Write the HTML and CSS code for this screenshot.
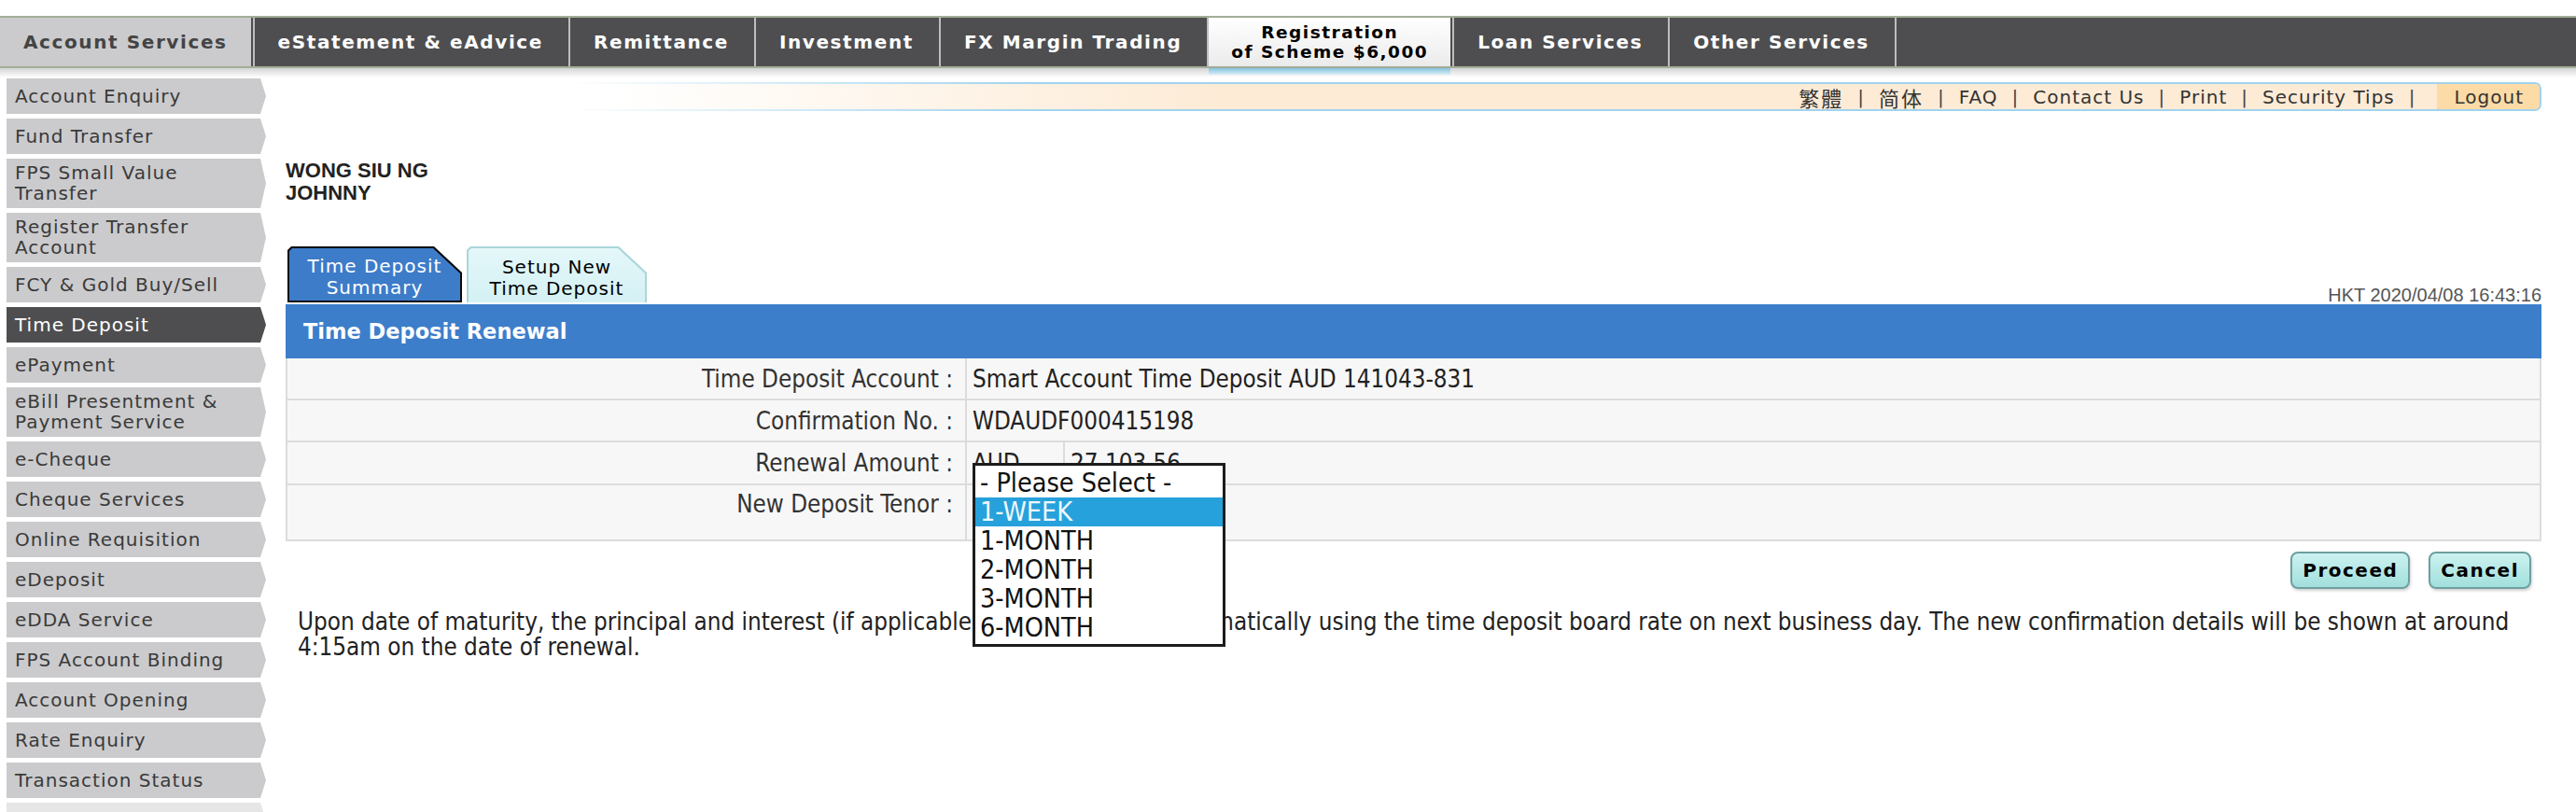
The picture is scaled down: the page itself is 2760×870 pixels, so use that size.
FILE: index.html
```html
<!DOCTYPE html>
<html lang="en">
<head>
<meta charset="utf-8">
<title>Time Deposit Renewal</title>
<link rel="stylesheet" href="styles.css">
</head>
<body>
<nav class="topnav">
  <a class="tab tab-light">Account Services</a>
  <a class="tab">eStatement &amp; eAdvice</a>
  <a class="tab">Remittance</a>
  <a class="tab">Investment</a>
  <a class="tab">FX Margin Trading</a>
  <a class="tab tab-reg">Registration<br>of Scheme $6,000</a>
  <a class="tab">Loan Services</a>
  <a class="tab">Other Services</a>
  <span class="tab tab-empty"></span>
</nav>
<div class="navshade"></div>
<div class="layout">
  <aside class="sidebar">
    <a class="side-item">Account Enquiry</a>
    <a class="side-item">Fund Transfer</a>
    <a class="side-item">FPS Small Value Transfer</a>
    <a class="side-item">Register Transfer Account</a>
    <a class="side-item">FCY &amp; Gold Buy/Sell</a>
    <a class="side-item active">Time Deposit</a>
    <a class="side-item">ePayment</a>
    <a class="side-item">eBill Presentment &amp; Payment Service</a>
    <a class="side-item">e-Cheque</a>
    <a class="side-item">Cheque Services</a>
    <a class="side-item">Online Requisition</a>
    <a class="side-item">eDeposit</a>
    <a class="side-item">eDDA Service</a>
    <a class="side-item">FPS Account Binding</a>
    <a class="side-item">Account Opening</a>
    <a class="side-item">Rate Enquiry</a>
    <a class="side-item">Transaction Status</a>
    <span class="side-item side-end"></span>
  </aside>
  <main class="main">
    <div class="utilbar">
      <div class="utilbar-in">
        <a class="util cjk">繁體</a><span class="sep">|</span>
        <a class="util cjk">简体</a><span class="sep">|</span>
        <a class="util">FAQ</a><span class="sep">|</span>
        <a class="util">Contact Us</a><span class="sep">|</span>
        <a class="util">Print</a><span class="sep">|</span>
        <a class="util">Security Tips</a><span class="sep">|</span>
        <a class="util logout">Logout</a>
      </div>
    </div>
    <div class="username">WONG SIU NG<br>JOHNNY</div>
    <div class="tabrow">
      <div class="subtab active"><div class="subtab-in">Time Deposit<br>Summary</div></div>
      <div class="subtab"><div class="subtab-in">Setup New<br>Time Deposit</div></div>
      <div class="timestamp">HKT 2020/04/08 16:43:16</div>
    </div>
    <div class="panel-head">Time Deposit Renewal</div>
    <div class="grid">
      <div class="cell label">Time Deposit Account :</div>
      <div class="cell value span2">Smart Account Time Deposit AUD 141043-831</div>
      <div class="cell label">Confirmation No. :</div>
      <div class="cell value span2">WDAUDF000415198</div>
      <div class="cell label">Renewal Amount :</div>
      <div class="cell value ddhost">AUD
        <ul class="dropdown">
          <li>- Please Select -</li>
          <li class="sel">1-WEEK</li>
          <li>1-MONTH</li>
          <li>2-MONTH</li>
          <li>3-MONTH</li>
          <li>6-MONTH</li>
        </ul>
      </div>
      <div class="cell value">27,103.56</div>
      <div class="cell label top tall">New Deposit Tenor :</div>
      <div class="cell value span2 tall"></div>
    </div>
    <div class="actions">
      <button class="btn">Proceed</button>
      <button class="btn">Cancel</button>
    </div>
    <p class="note">Upon date of maturity, the principal and interest (if applicable) will be renewed automatically using the time deposit board rate on next business day. The new confirmation details will be shown at around 4:15am on the date of renewal.</p>
  </main>
</div>
</body>
</html>
```
FILE: styles.css
```css
* { box-sizing: border-box; }
body {
  margin: 0;
  background: #fff;
  font-family: "DejaVu Sans", "Noto Sans CJK TC", sans-serif;
  color: #333;
}
a { text-decoration: none; }

/* top navigation */
.topnav {
  margin-top: 17px;
  display: flex;
  height: 56px;
  background: #4e4e50;
  border-top: 2px solid #a3ad98;
  border-bottom: 2px solid #a3ad98;
}
.tab {
  position: relative;
  display: flex;
  align-items: center;
  justify-content: center;
  padding: 0 25px;
  color: #fff;
  font-weight: bold;
  font-size: 20px;
  letter-spacing: 1.6px;
  white-space: nowrap;
  margin-left: 2px;
  border-left: 2px solid #bdbdbd;
}
.tab:first-child { margin-left: 0; border-left: 0; }
.tab-light { background: #cbcbcd; color: #444; }
.tab-reg {
  background: linear-gradient(#ffffff, #ebebeb);
  color: #000;
  font-size: 18.5px;
  line-height: 21px;
  letter-spacing: 1.5px;
  text-align: center;
  padding: 0 24px;
}
.tab-reg::after {
  content: "";
  position: absolute;
  left: 0;
  right: 0;
  top: calc(100% + 2px);
  height: 7px;
  background: linear-gradient(#86c3dc, #d8eef6);
}
.tab-empty { flex: 1; padding: 0; }
.navshade { height: 10px; background: linear-gradient(#d4d4d4, #ffffff); }

/* layout */
.layout { display: flex; align-items: flex-start; }
.sidebar {
  width: 285px;
  flex: none;
  padding: 1px 0 0 7px;
  display: flex;
  flex-direction: column;
  gap: 5px;
}
.side-item {
  display: flex;
  align-items: center;
  min-height: 38px;
  padding: 4px 16px 5px 9px;
  background: #cbcbcd;
  color: #3a3a3a;
  font-size: 20px;
  letter-spacing: 1px;
  line-height: 22px;
  clip-path: polygon(0 0, calc(100% - 6px) 0, 100% 50%, calc(100% - 6px) 100%, 0 100%);
}
.side-item.active { background: #4e4e50; color: #fff; }
.side-item.side-end { background: #e6e6e6; }

.main { flex: 1; min-width: 0; padding: 5px 37px 0 21px; }

/* utility bar */
.utilbar {
  height: 31px;
  padding: 2px 2px 2px 0;
  border-radius: 0 7px 7px 0;
  background: linear-gradient(to right, rgba(160, 210, 238, 0) 0, rgba(160, 210, 238, 0) 300px, #a2d3ee 800px);
}
.utilbar-in {
  height: 100%;
  display: flex;
  align-items: stretch;
  justify-content: flex-end;
  border-radius: 0 5px 5px 0;
  background: linear-gradient(to right, #fff 0, #fff 350px, #fdebd6 1000px);
  font-size: 20px;
  letter-spacing: 1px;
  color: #333;
  overflow: hidden;
}
.util { display: flex; align-items: center; color: #333; }
.util.cjk { font-size: 22px; letter-spacing: 2px; }
.sep { display: flex; align-items: center; margin: 0 15px; color: #444; }
.logout { background: #fcdba6; padding: 0 17px 0 19px; margin-left: 7px; }

/* user name */
.username {
  margin-top: 52px;
  font-family: "Liberation Sans", Arial, sans-serif;
  font-weight: bold;
  font-size: 22px;
  line-height: 24px;
  color: #222;
}

/* sub tabs */
.tabrow {
  margin-top: 45px;
  display: flex;
  align-items: flex-end;
  gap: 5px;
  padding-left: 2px;
  height: 60px;
}
.subtab {
  width: 187px;
  height: 60px;
  padding: 2px 2px 0 2px;
  background: #0b0b0b;
  clip-path: polygon(0 4px, 4px 0, calc(100% - 30px) 0, 100% 28px, 100% 100%, 0 100%);
}
.subtab.active { padding-bottom: 2px; }
.subtab-in {
  height: 100%;
  display: flex;
  align-items: center;
  justify-content: center;
  text-align: center;
  font-size: 20px;
  letter-spacing: 1px;
  line-height: 23px;
  padding-top: 6px;
  background: #3d7cc9;
  color: #fff;
  clip-path: polygon(0 3px, 3px 0, calc(100% - 29px) 0, 100% 27px, 100% 100%, 0 100%);
}
.subtab:not(.active) { width: 193px; background: #a9d6da; }
.subtab:not(.active) .subtab-in { background: linear-gradient(#e4f7f9, #d4f1f4); color: #000; }
.timestamp {
  margin-left: auto;
  font-family: "Liberation Sans", Arial, sans-serif;
  font-size: 20px;
  line-height: 18px;
  color: #555;
  margin-bottom: -1px;
}

/* panel */
.panel-head {
  margin-top: 2px;
  height: 58px;
  display: flex;
  align-items: center;
  padding-left: 19px;
  background: #3d7ecb;
  color: #fff;
  font-weight: bold;
  font-size: 22.5px;
}
.grid {
  display: grid;
  grid-template-columns: 726px 103px 1fr;
  grid-template-rows: 43px 43px 44px 58px;
  gap: 2px;
  background: #dcdcdc;
  border: 2px solid #dcdcdc;
  border-top: 0;
  font-family: "DejaVu Sans Condensed", "DejaVu Sans", sans-serif;
  font-size: 25.8px;
  color: #333;
}
.cell { background: #f7f7f7; display: flex; align-items: center; white-space: nowrap; }
.label { justify-content: flex-end; padding-right: 13px; }
.label.top { align-items: flex-start; padding-top: 5px; }
.value { padding-left: 6px; color: #222; }
.span2 { grid-column: span 2; }
.ddhost { position: relative; }
.dropdown {
  position: absolute;
  left: 6px;
  top: 22px;
  z-index: 5;
  width: 271px;
  margin: 0;
  padding: 3px 0 2px 0;
  list-style: none;
  background: #fff;
  border: 3px solid #1c1c1c;
  font-size: 28.5px;
  color: #111;
}
.dropdown li { height: 31px; line-height: 31px; padding-left: 5px; white-space: nowrap; }
.dropdown li.sel { background: #27a1db; color: #eef8ff; }

/* actions */
.actions {
  margin-top: 11px;
  display: flex;
  justify-content: flex-end;
  gap: 20px;
  padding-right: 11px;
}
.btn {
  height: 40px;
  padding: 0 11px;
  border: 2px solid #6e9f9f;
  border-radius: 8px;
  background: linear-gradient(#cbf2f0, #a2dfdc);
  box-shadow: 1px 2px 3px rgba(0, 0, 0, 0.18);
  font-family: "DejaVu Sans", sans-serif;
  font-weight: bold;
  font-size: 20px;
  letter-spacing: 1.5px;
  color: #000;
}

.note {
  margin: 22px 0 0 0;
  padding: 0 13px;
  font-family: "DejaVu Sans Condensed", "DejaVu Sans", sans-serif;
  font-size: 25.8px;
  line-height: 27px;
  color: #222;
}
```
